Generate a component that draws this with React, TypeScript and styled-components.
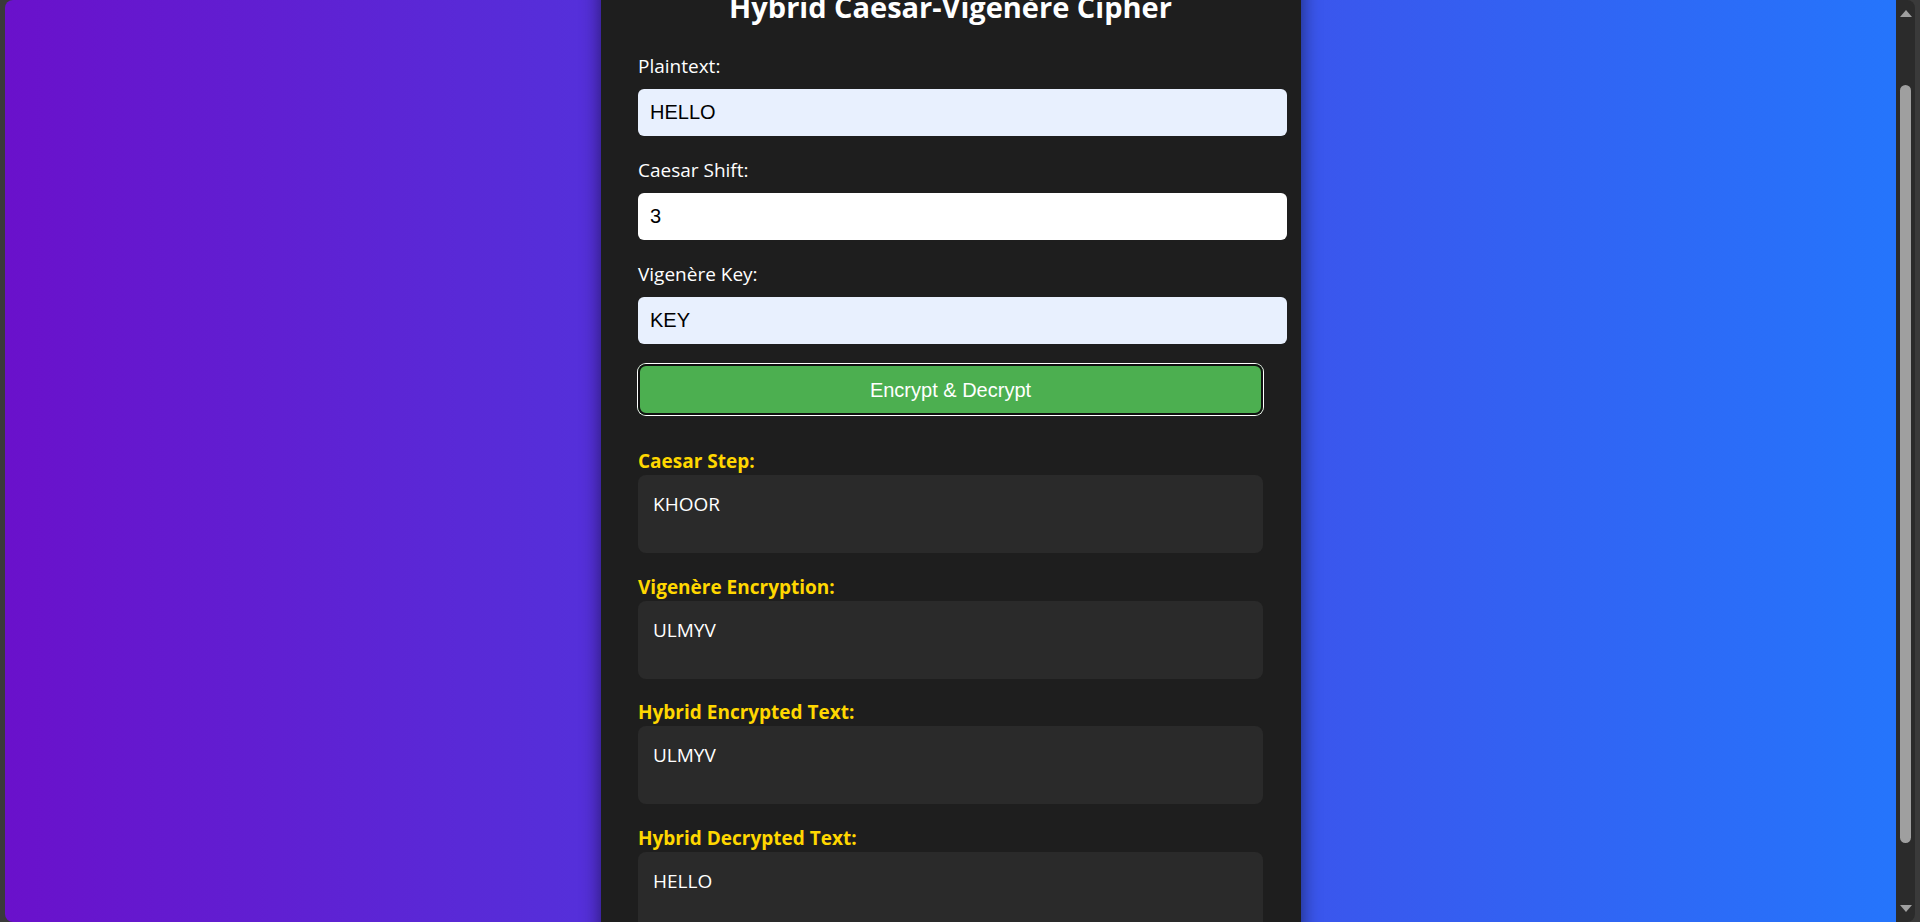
import React, { useLayoutEffect, useRef, useState } from "react";
import styled, { createGlobalStyle, css } from "styled-components";

const GlobalStyle = createGlobalStyle`
  html, body {
    margin: 0;
    height: 100%;
    overflow: hidden;
    background: #3a3a3a;
  }
  #root { height: 100%; }
`;

const Frame = styled.div`
  box-sizing: border-box;
  display: flex;
  height: 100vh;
  padding: 0 5px;
  background: #3a3a3a;
`;

const Window = styled.div`
  flex: 1;
  display: flex;
  min-width: 0;
  border-radius: 8px;
  overflow: hidden;
`;

const Viewport = styled.div`
  flex: 1;
  min-width: 0;
  height: 100%;
  overflow-y: auto;
  overflow-x: hidden;
  scrollbar-width: none;
  &::-webkit-scrollbar {
    display: none;
  }
`;

const ScrollRail = styled.div`
  flex: 0 0 19px;
  display: flex;
  flex-direction: column;
  background: #2b2b2b;
`;

const ArrowButton = styled.div<{ $down?: boolean }>`
  flex: 0 0 22px;
  display: flex;
  justify-content: center;
  align-items: ${(p) => (p.$down ? "flex-start" : "flex-end")};
  padding: ${(p) => (p.$down ? "5px 0 0" : "0 0 5px")};
  box-sizing: border-box;
`;

const Track = styled.div`
  flex: 1;
  position: relative;
`;

const Thumb = styled.div`
  position: absolute;
  left: 4px;
  right: 4px;
  border-radius: 6px;
  background: #9f9f9f;
`;

const Page = styled.main`
  min-height: 100%;
  padding: 0.5px 0 23.5px;
  background: linear-gradient(to right, #6a11cb, #2575fc);
  font-family: "Open Sans", "Noto Sans", sans-serif;
`;

const Card = styled.section`
  box-sizing: border-box;
  width: 700px;
  margin: 0 auto;
  padding: 37.5px;
  background: #1e1e1e;
  border-radius: 12px;
  box-shadow: 0 0 19px rgba(0, 0, 0, 0.55);
  color: #fff;
`;

const Title = styled.h2`
  margin: 25px 0;
  text-align: center;
  font-size: 29px;
  line-height: 40px;
  font-weight: 700;
  color: #fff;
`;

const Field = styled.div`
  display: flex;
  flex-direction: column;
`;

const Label = styled.label`
  display: block;
  margin-bottom: 9px;
  font-size: 19px;
  line-height: 28px;
  color: #fff;
`;

const Input = styled.input<{ $autofill?: boolean }>`
  display: block;
  box-sizing: content-box;
  width: 100%;
  margin: 0 0 20px;
  padding: 12px;
  border: 0;
  border-radius: 6px;
  outline: none;
  background: ${(p) => (p.$autofill ? "#e8f0fe" : "#ffffff")};
  color: #000;
  font-family: "Liberation Sans", Arial, sans-serif;
  font-size: 20px;
  line-height: 23px;
  height: 23px;
`;

const ActionButton = styled.button<{ $focused?: boolean }>`
  display: block;
  width: 100%;
  padding: 13.5px 0;
  border: 0;
  border-radius: 8px;
  background: #4caf50;
  color: #fff;
  font-family: "Liberation Sans", Arial, sans-serif;
  font-size: 20px;
  line-height: 24px;
  cursor: pointer;
  outline: none;
  ${(p) =>
    p.$focused &&
    css`
      box-shadow: inset 0 0 0 2px #101010, 0 0 0 1px #ffffff;
    `}
`;

const Results = styled.div`
  margin-top: 32px;
  display: flex;
  flex-direction: column;
  gap: 19.5px;
`;

const ResultItem = styled.div`
  display: flex;
  flex-direction: column;
`;

const ResultLabel = styled.span`
  font-size: 19px;
  line-height: 28px;
  font-weight: 700;
  color: #ffd700;
`;

const ResultBox = styled.div`
  box-sizing: border-box;
  min-height: 78px;
  padding: 15px;
  border-radius: 8px;
  background: #2a2a2a;
  color: #fff;
  font-size: 19px;
  line-height: 28px;
  word-break: break-all;
`;

const A = "A".charCodeAt(0);

function caesar(text: string, shift: number): string {
  const s = ((shift % 26) + 26) % 26;
  return text.replace(/[a-z]/gi, (ch) => {
    const base = ch === ch.toUpperCase() ? 65 : 97;
    return String.fromCharCode(((ch.charCodeAt(0) - base + s) % 26) + base);
  });
}

function vigenere(text: string, key: string, decrypt = false): string {
  const k = key.toUpperCase().replace(/[^A-Z]/g, "");
  if (!k) return text;
  let i = 0;
  return text.replace(/[a-z]/gi, (ch) => {
    const base = ch === ch.toUpperCase() ? 65 : 97;
    const shift = k.charCodeAt(i % k.length) - A;
    i += 1;
    const d = decrypt ? 26 - shift : shift;
    return String.fromCharCode(((ch.charCodeAt(0) - base + d) % 26) + base);
  });
}

function compute(plain: string, shift: number, key: string) {
  const step = caesar(plain, shift);
  const vig = vigenere(step, key);
  const dec = caesar(vigenere(vig, key, true), -shift);
  return { step, vig, enc: vig, dec };
}

const UpArrow = () => (
  <svg width="12" height="7" viewBox="0 0 12 7">
    <polygon points="6,0 12,7 0,7" fill="#9f9f9f" />
  </svg>
);

const DownArrow = () => (
  <svg width="12" height="7" viewBox="0 0 12 7">
    <polygon points="0,0 12,0 6,7" fill="#9f9f9f" />
  </svg>
);

export default function App() {
  const viewportRef = useRef<HTMLDivElement>(null);
  const trackRef = useRef<HTMLDivElement>(null);
  const [plain, setPlain] = useState("HELLO");
  const [shift, setShift] = useState("3");
  const [key, setKey] = useState("KEY");
  const [result, setResult] = useState(() => compute("HELLO", 3, "KEY"));
  const [focused, setFocused] = useState(true);
  const [thumb, setThumb] = useState({ top: 61, height: 759 });

  const updateThumb = () => {
    const v = viewportRef.current;
    const t = trackRef.current;
    if (!v || !t) return;
    const track = t.clientHeight;
    const ratio = v.clientHeight / v.scrollHeight;
    const height = Math.max(20, track * ratio);
    const maxScroll = v.scrollHeight - v.clientHeight;
    const top = maxScroll > 0 ? (v.scrollTop / maxScroll) * (track - height) : 0;
    setThumb({ top, height });
  };

  useLayoutEffect(() => {
    if (viewportRef.current) viewportRef.current.scrollTop = 76;
    updateThumb();
  }, []);

  const run = () => {
    setResult(compute(plain, parseInt(shift, 10) || 0, key));
    setFocused(true);
  };

  const items = [
    { label: "Caesar Step:", value: result.step },
    { label: "Vigenère Encryption:", value: result.vig },
    { label: "Hybrid Encrypted Text:", value: result.enc },
    { label: "Hybrid Decrypted Text:", value: result.dec },
  ];

  return (
    <>
      <GlobalStyle />
      <Frame>
        <Window>
          <Viewport ref={viewportRef} onScroll={updateThumb}>
            <Page>
              <Card>
                <Title>Hybrid Caesar-Vigenère Cipher</Title>
                <Field>
                  <Label htmlFor="plain">Plaintext:</Label>
                  <Input id="plain" $autofill value={plain} onChange={(e) => setPlain(e.target.value)} />
                </Field>
                <Field>
                  <Label htmlFor="shift">Caesar Shift:</Label>
                  <Input id="shift" type="text" value={shift} onChange={(e) => setShift(e.target.value)} />
                </Field>
                <Field>
                  <Label htmlFor="key">Vigenère Key:</Label>
                  <Input id="key" $autofill value={key} onChange={(e) => setKey(e.target.value)} />
                </Field>
                <ActionButton $focused={focused} onClick={run} onBlur={() => setFocused(false)}>
                  Encrypt &amp; Decrypt
                </ActionButton>
                <Results>
                  {items.map((it) => (
                    <ResultItem key={it.label}>
                      <ResultLabel>{it.label}</ResultLabel>
                      <ResultBox>{it.value}</ResultBox>
                    </ResultItem>
                  ))}
                </Results>
              </Card>
            </Page>
          </Viewport>
          <ScrollRail>
            <ArrowButton>
              <UpArrow />
            </ArrowButton>
            <Track ref={trackRef}>
              <Thumb style={{ top: thumb.top, height: thumb.height }} />
            </Track>
            <ArrowButton $down>
              <DownArrow />
            </ArrowButton>
          </ScrollRail>
        </Window>
      </Frame>
    </>
  );
}
